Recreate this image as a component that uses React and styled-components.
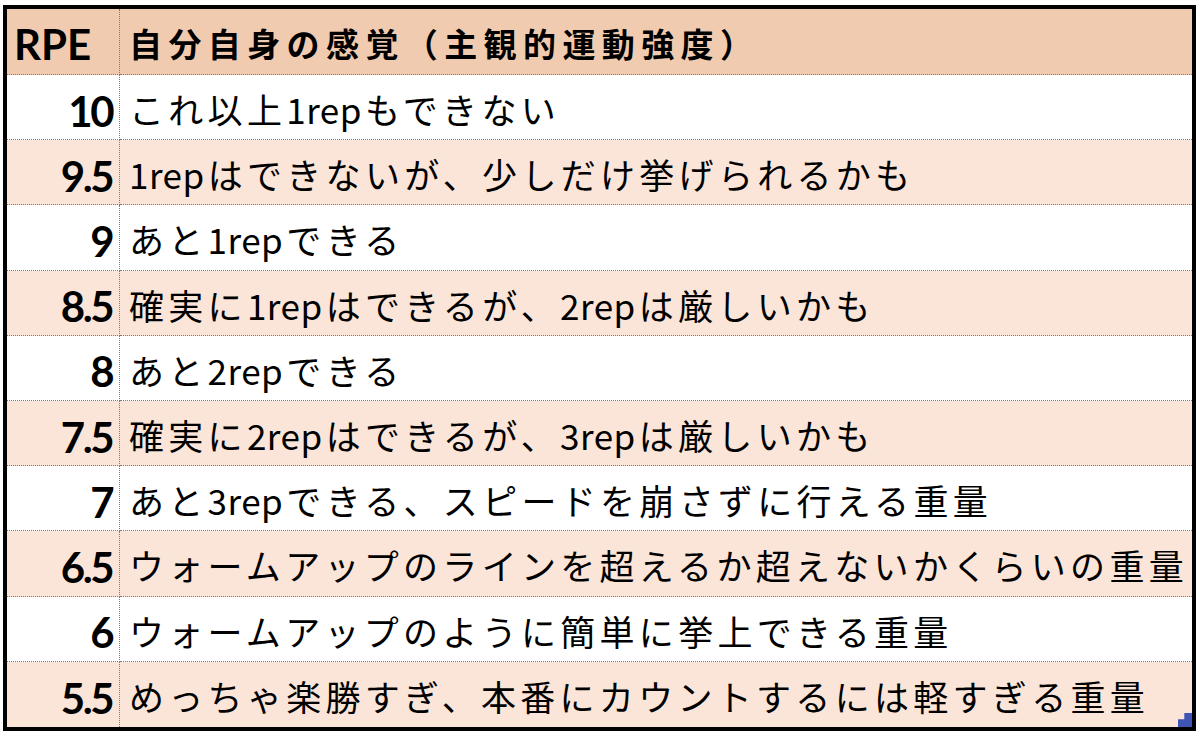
import React from "react";
import styled, { createGlobalStyle } from "styled-components";

const Global = createGlobalStyle`
  html, body { margin: 0; padding: 0; background: #ffffff; }
  body { font-family: "Noto Sans CJK JP", "Noto Sans", sans-serif; color: #000; }
`;

const Page = styled.div`
  width: 1200px;
  height: 739px;
  padding: 5px 0 0 3px;
  box-sizing: border-box;
  position: relative;
`;

const Table = styled.div`
  position: relative;
  width: 1193px;
  height: 726px;
  box-sizing: border-box;
  border: 4px solid #000;
  display: grid;
  grid-template-columns: 113px 1fr;
  grid-template-rows: 66px repeat(10, 1fr);
`;

const Cell = styled.div`
  display: flex;
  align-items: center;
  box-sizing: border-box;
  background: ${(p) => (p.$head ? "#F1CBAF" : p.$alt ? "#FBE5D8" : "#FFFFFF")};
  border-bottom: ${(p) => (p.$last ? "none" : "1px dotted #7a7a7a")};
  border-right: ${(p) => (p.$num ? "1px dotted #7a7a7a" : "none")};
`;

const NumCell = styled(Cell)`
  justify-content: ${(p) => (p.$head ? "flex-start" : "flex-end")};
  padding: ${(p) => (p.$head ? "4px 0 0 7px" : "7px 7px 0 0")};
  font-family: Lato, "Liberation Sans", sans-serif;
  font-weight: 700;
  font-size: 42px;
  letter-spacing: ${(p) => (p.$head ? "0px" : "-2.5px")};
  line-height: 1;
`;

const TextCell = styled(Cell)`
  padding: 3px 0 0 9px;
  font-family: "Noto Sans CJK JP", "Noto Sans", sans-serif;
  font-weight: ${(p) => (p.$head ? 700 : 400)};
  font-size: ${(p) => (p.$head ? "33px" : "35px")};
  letter-spacing: ${(p) => (p.$head ? "6.4px" : "4.3px")};
  line-height: 1;
  white-space: nowrap;
`;

const Latin = styled.span`
  letter-spacing: 0.5px;
  margin-right: 3px;
`;

const Handle = styled.div`
  position: absolute;
  right: 0px;
  bottom: 0px;
  width: 14px;
  height: 14px;
  background: #3F55B5;
  clip-path: polygon(100% 0, 100% 100%, 0 100%, 0 45%, 45% 45%, 45% 0);
`;

const rows = [
  ["10", "これ以上1repもできない"],
  ["9.5", "1repはできないが、少しだけ挙げられるかも"],
  ["9", "あと1repできる"],
  ["8.5", "確実に1repはできるが、2repは厳しいかも"],
  ["8", "あと2repできる"],
  ["7.5", "確実に2repはできるが、3repは厳しいかも"],
  ["7", "あと3repできる、スピードを崩さずに行える重量"],
  ["6.5", "ウォームアップのラインを超えるか超えないかくらいの重量"],
  ["6", "ウォームアップのように簡単に挙上できる重量"],
  ["5.5", "めっちゃ楽勝すぎ、本番にカウントするには軽すぎる重量"],
];

function renderText(t) {
  return t.split(/([0-9a-z]+)/).map((part, i) =>
    /^[0-9a-z]+$/.test(part) ? <Latin key={i}>{part}</Latin> : part
  );
}

export default function App() {
  return (
    <>
      <Global />
      <Page>
        <Table>
          <NumCell $head $num>RPE</NumCell>
          <TextCell $head>自分自身の感覚（主観的運動強度）</TextCell>
          {rows.map(([n, t], i) => {
            const alt = i % 2 === 1;
            const last = i === rows.length - 1;
            return (
              <React.Fragment key={n}>
                <NumCell $num $alt={alt} $last={last}>{n}</NumCell>
                <TextCell $alt={alt} $last={last}>{renderText(t)}</TextCell>
              </React.Fragment>
            );
          })}
          <Handle />
        </Table>
      </Page>
    </>
  );
}
